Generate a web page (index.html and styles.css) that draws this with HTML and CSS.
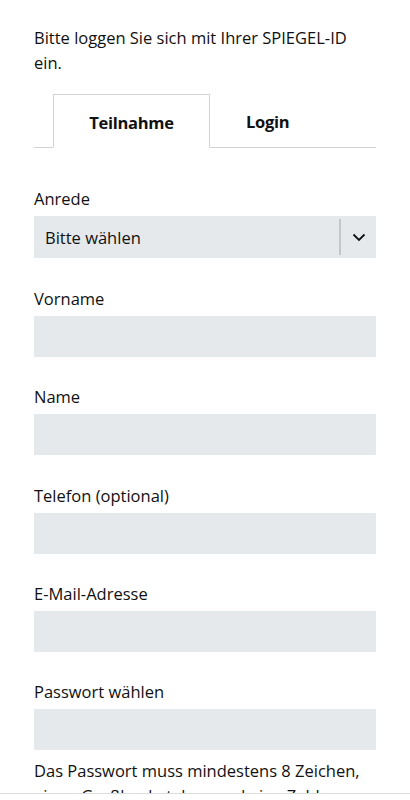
FILE: index.html
```html
<!DOCTYPE html>
<html lang="de">
<head>
<meta charset="utf-8">
<link rel="stylesheet" href="styles.css">
</head>
<body>
<main class="page">
  <p class="intro">Bitte loggen Sie sich mit Ihrer SPIEGEL-ID ein.</p>
  <nav class="tabs">
    <span class="tab-spacer"></span>
    <span class="tab active">Teilnahme</span>
    <span class="tab">Login</span>
    <span class="tab-fill"></span>
  </nav>
  <form class="form">
    <div class="field field-select">
      <label class="label">Anrede</label>
      <div class="select">
        <span class="select-text">Bitte wählen</span>
        <span class="select-btn">
          <svg width="14" height="9" viewBox="0 0 14 9"><path d="M1.5 1.5 L7 7 L12.5 1.5" fill="none" stroke="#111" stroke-width="1.8"/></svg>
        </span>
      </div>
    </div>
    <div class="field">
      <label class="label">Vorname</label>
      <div class="input"></div>
    </div>
    <div class="field">
      <label class="label">Name</label>
      <div class="input"></div>
    </div>
    <div class="field">
      <label class="label">Telefon (optional)</label>
      <div class="input"></div>
    </div>
    <div class="field">
      <label class="label">E-Mail-Adresse</label>
      <div class="input"></div>
    </div>
    <div class="field">
      <label class="label">Passwort wählen</label>
      <div class="input"></div>
      <p class="hint">Das Passwort muss mindestens 8 Zeichen, einen Großbuchstaben und eine Zahl haben.</p>
    </div>
  </form>
</main>
<div class="bottom-bar"></div>
</body>
</html>
```

FILE: styles.css
```css
html, body {
  margin: 0;
  padding: 0;
  background: #fff;
}
body {
  font-family: "Open Sans", "Noto Sans", "Liberation Sans", sans-serif;
  color: #111;
  font-size: 16.5px;
  line-height: 25px;
}
.page {
  padding: 25px 34px 0 34px;
}
.intro {
  margin: 0;
  padding-right: 14px;
}
.tabs {
  display: flex;
  margin-top: 19px;
  height: 54px;
}
.tab-spacer {
  width: 19px;
  border-bottom: 1px solid #d3d3d3;
}
.tab-fill {
  flex: 1;
  border-bottom: 1px solid #d3d3d3;
}
.tab {
  display: flex;
  align-items: center;
  justify-content: center;
  padding: 2px 36px 0;
  font-weight: 700;
  border-bottom: 1px solid #d3d3d3;
  letter-spacing: -0.3px;
}
.tab.active {
  border: 1px solid #d3d3d3;
  border-bottom: 1px solid transparent;
  width: 155px;
  padding: 2px 0 0;
}
.form {
  padding-top: 38px;
}
.field {
  margin-bottom: 27.25px;
}
.field-select {
  margin-bottom: 28px;
}
.label {
  display: block;
  height: 26px;
  margin-bottom: 4px;
}
.input {
  height: 41px;
  background: #e6e9ec;
}
.select {
  height: 42px;
  background: #e6e9ec;
  display: flex;
  align-items: center;
}
.select-text {
  flex: 1;
  padding-left: 11px;
}
.select-btn {
  width: 35px;
  height: 36px;
  border-left: 2px solid #c4c6c8;
  display: flex;
  align-items: center;
  justify-content: center;
}
.hint {
  margin: 8px 0 0 0;
}
.bottom-bar {
  position: fixed;
  left: 0;
  right: 0;
  bottom: 0;
  height: 6px;
  background: #fff;
  border-top: 1px solid #dcdcdc;
}
```
